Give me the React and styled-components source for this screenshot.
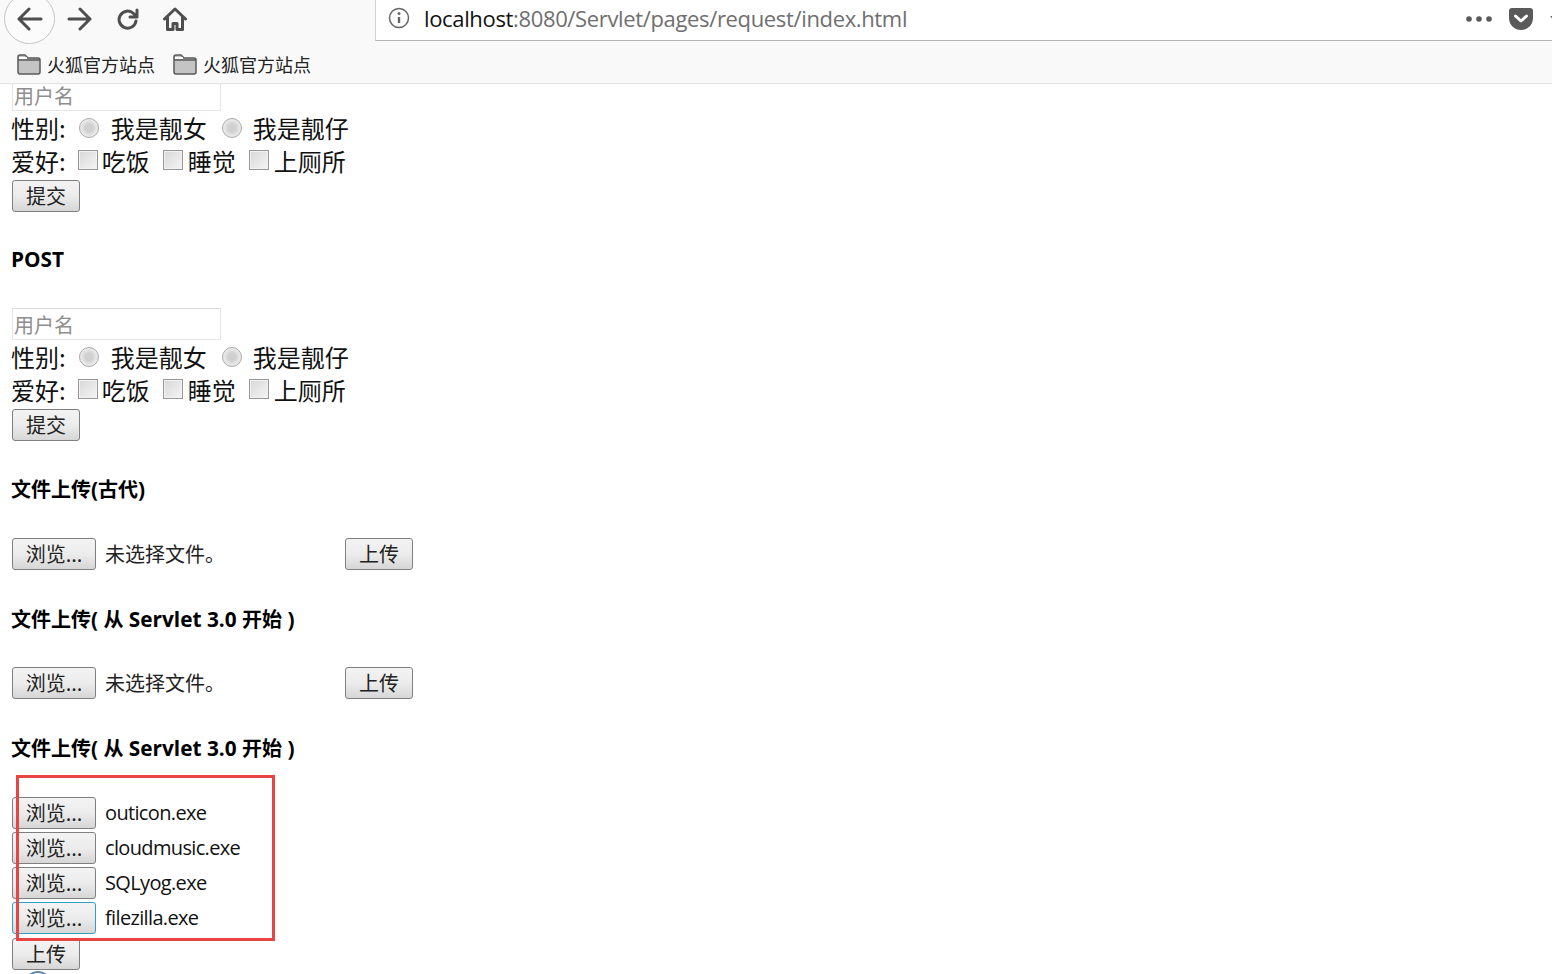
import React from "react";
import styled, { createGlobalStyle } from "styled-components";

const CJK = '"Noto Sans CJK SC", "Noto Sans", sans-serif';
const UI = '"Open Sans", "Noto Sans CJK SC", sans-serif';

const Global = createGlobalStyle`
  html, body { margin: 0; padding: 0; background: #fff; overflow: hidden; }
  body { font-family: ${CJK}; color: #111; }
`;

const Shell = styled.div`
  width: 1552px; height: 974px; overflow: hidden; position: relative; background: #fff;
`;
const Header = styled.header`position: relative; z-index: 1;`;
const Toolbar = styled.div`
  height: 41px; background: #f9f9f9; display: flex; align-items: flex-start; position: relative;
`;
const BackCircle = styled.div`
  position: absolute; left: 4px; top: -7px; width: 51px; height: 51px; box-sizing: border-box;
  border: 1px solid #c4c4c4; border-radius: 50%; background: #fbfbfb;
  display: flex; align-items: center; justify-content: center;
`;
const NavIcons = styled.div`
  display: flex; align-items: center; margin-left: 67px; height: 38px; gap: 24px;
`;
const UrlBar = styled.div`
  position: absolute; left: 375px; right: 0; top: 0; height: 41px; box-sizing: border-box;
  background: #fff; border-left: 1px solid #d4d4d4; border-bottom: 1px solid #b5b5b5;
  display: flex; align-items: center; padding: 0 0 4px 12px;
`;
const Host = styled.span`font: 22px/28px ${UI}; color: #111; margin-left: 14px; letter-spacing: -0.35px;`;
const Path = styled.span`font: 22px/28px ${UI}; color: #6f6f6f; letter-spacing: -0.35px;`;
const UrlActions = styled.div`
  margin: 2px -6px 0 auto; display: flex; align-items: center; gap: 17px;
`;
const BookBar = styled.div`
  height: 43px; box-sizing: border-box; background: #f9f9f9; border-bottom: 1px solid #e2e2e2;
  display: flex; align-items: center; padding: 3px 0 0 17px; gap: 18px;
`;
const BookItem = styled.div`
  display: flex; align-items: center; gap: 6px; font: 18px/26px ${CJK}; color: #222;
`;

const Page = styled.main`padding-left: 12px; margin-top: -5px;`;
const Row = styled.div`
  height: 33px; margin-left: -1px; display: flex; align-items: center; font: 24px/33px ${CJK}; color: #111;
`;
const NameInput = styled.input`
  display: block; width: 209px; height: 32px; box-sizing: border-box; padding: 0 1px;
  border: 1px solid #e6e6e6; border-top-color: #dcdcdc; background: #fff; font: 20px/26px ${CJK};
  outline: none;
  &::placeholder { color: #8e8e8e; opacity: 1; }
`;
const Radio = styled.span`
  width: 20px; height: 20px; box-sizing: border-box; border-radius: 50%; flex: none;
  border: 1px solid #a9a9a9; margin: 0 ${p => p.$right}px 0 ${p => p.$left}px;
  background: radial-gradient(circle at 50% 50%, #d0d0d0 0 30%, #e4e4e4 55%, #fdfdfd 100%);
`;
const Check = styled.span`
  width: 20px; height: 20px; box-sizing: border-box; flex: none;
  border: 1px solid #979797; margin: -2px ${p => p.$right}px 0 ${p => p.$left}px;
  background: linear-gradient(135deg, #d8d8d8, #f4f4f4);
  box-shadow: inset 0 0 0 1px #f2f2f2;
`;
const Btn = styled.button`
  display: block; box-sizing: border-box; height: 32px; width: ${p => p.$w || 68}px; padding: 0;
  border: 1px solid ${p => (p.$focus ? "#2f9fc4" : "#7f7f7f")}; border-radius: 3px;
  background: linear-gradient(#f3f3f3, #ececec 50%, #d6d6d6);
  font: 20px/28px ${CJK}; color: #222; flex: none;
`;
const Heading = styled.h4`
  margin: 0 0 0 -1px; font: bold 20.8px/30px ${UI}; color: #000;
  padding-top: ${p => p.$top}px; height: 30px; box-sizing: content-box; white-space: pre;
`;
const Han = styled.span`font-size: 20px; font-family: ${CJK};`;
const FileRow = styled.div`
  display: flex; align-items: center; margin-top: ${p => p.$top}px; height: 32px;
`;
const FileName = styled.span`
  font: 20px/32px ${UI}; margin-left: 9px; color: #111; letter-spacing: -0.65px;
`;
const EmptyName = styled.span`
  font: 20px/32px ${CJK}; margin-left: 9px; width: 240px; color: #222;
`;
const Gap = styled.div`height: ${p => p.$h}px;`;
const RedMark = styled.div`
  position: absolute; left: 16px; top: 775px; width: 259px; height: 166px; box-sizing: border-box;
  border: 3px solid #e74444;
`;
const Peek = styled.div`
  position: absolute; left: 24px; top: 971px; width: 28px; height: 28px; box-sizing: border-box;
  border: 2px solid #5f87a8; border-radius: 50%;
`;

const Folder = () => (
  <svg width="24" height="22" viewBox="0 0 24 22">
    <path d="M1 4a2 2 0 0 1 2-2h5l3 3h10a2 2 0 0 1 2 2v12a2 2 0 0 1-2 2H3a2 2 0 0 1-2-2z" fill="#c4c4c4" stroke="#5a5a5a" strokeWidth="1.5" />
    <path d="M1 7h22" stroke="#5a5a5a" strokeWidth="1.5" />
    <path d="M2 5h8" stroke="#fff" strokeWidth="2" />
  </svg>
);
const stroke = { fill: "none", stroke: "#4e4e4e", strokeWidth: 3, strokeLinecap: "round", strokeLinejoin: "round" };

const Form = () => (
  <>
    <NameInput placeholder="用户名" readOnly />
    <Row>性别:<Radio $left={13} $right={12} />我是靓女<Radio $left={15} $right={11} />我是靓仔</Row>
    <Row>爱好:<Check $left={12} $right={4} />吃饭<Check $left={13} $right={5} />睡觉<Check $left={13} $right={5} />上厕所</Row>
    <Gap $h={3} />
    <Btn>提交</Btn>
  </>
);

const Browse = ({ focus }) => <Btn $w={84} $focus={focus}>浏览...</Btn>;

const ServletTitle = ({ top }) => (
  <Heading $top={top}><Han>文件上传</Han>( <Han>从</Han> Servlet 3.0 <Han>开始</Han> )</Heading>
);

export default function App() {
  return (
    <Shell>
      <Global />
      <Header>
        <Toolbar>
          <BackCircle>
            <svg width="26" height="24" viewBox="0 0 26 24"><path d="M12 2 2 12l10 10M2 12h22" {...stroke} /></svg>
          </BackCircle>
          <NavIcons>
            <svg width="25" height="24" viewBox="0 0 25 24"><path d="M13 2l10 10-10 10M23 12H2" {...stroke} /></svg>
            <svg width="23" height="24" viewBox="0 0 23 24"><path d="M20 14a8.500 8.500 0 1 1-2.500-7.500L21 10M21 3v7h-7" {...stroke} /></svg>
            <svg width="24" height="26" viewBox="0 0 24 26"><path d="M1.500 13 12 3l10.500 10M4.500 11v12.500h5.500v-6h4v6h5.500V11" {...stroke} /></svg>
          </NavIcons>
          <UrlBar>
            <svg width="22" height="22" viewBox="0 0 22 22">
              <circle cx="11" cy="11" r="9.500" fill="none" stroke="#666" strokeWidth="1.500" />
              <path d="M11 10v6" stroke="#666" strokeWidth="2.400" />
              <circle cx="11" cy="6.600" r="1.500" fill="#666" />
            </svg>
            <Host>localhost</Host><Path>:8080/Servlet/pages/request/index.html</Path>
            <UrlActions>
              <svg width="26" height="6" viewBox="0 0 26 6">
                <circle cx="3" cy="3" r="2.800" fill="#5a5a5a" /><circle cx="13" cy="3" r="2.800" fill="#5a5a5a" /><circle cx="23" cy="3" r="2.800" fill="#5a5a5a" />
              </svg>
              <svg width="24" height="22" viewBox="0 0 24 22">
                <path d="M3 0h18a3 3 0 0 1 3 3v7a12 12 0 0 1-24 0V3a3 3 0 0 1 3-3z" fill="#5a5a5a" />
                <path d="M6.500 8 12 13l5.500-5" fill="none" stroke="#fff" strokeWidth="3" strokeLinecap="round" strokeLinejoin="round" />
              </svg>
              <svg width="8" height="6" viewBox="0 0 8 6"><path d="M0 0h8L4 5z" fill="#666" /></svg>
            </UrlActions>
          </UrlBar>
        </Toolbar>
        <BookBar>
          <BookItem><Folder />火狐官方站点</BookItem>
          <BookItem><Folder />火狐官方站点</BookItem>
        </BookBar>
      </Header>
      <Page>
        <Form />
        <Heading $top={32}>POST</Heading>
        <Gap $h={34} />
        <Form />
        <Heading $top={33}><Han>文件上传</Han>(<Han>古代</Han>)</Heading>
        <FileRow $top={34}><Browse /><EmptyName>未选择文件。</EmptyName><Btn>上传</Btn></FileRow>
        <ServletTitle top={34} />
        <FileRow $top={33}><Browse /><EmptyName>未选择文件。</EmptyName><Btn>上传</Btn></FileRow>
        <ServletTitle top={34} />
        <FileRow $top={34}><Browse /><FileName>outicon.exe</FileName></FileRow>
        <FileRow $top={3}><Browse /><FileName>cloudmusic.exe</FileName></FileRow>
        <FileRow $top={3}><Browse /><FileName>SQLyog.exe</FileName></FileRow>
        <FileRow $top={3}><Browse focus /><FileName>filezilla.exe</FileName></FileRow>
        <Gap $h={4} />
        <Btn>上传</Btn>
      </Page>
      <RedMark />
      <Peek />
    </Shell>
  );
}
